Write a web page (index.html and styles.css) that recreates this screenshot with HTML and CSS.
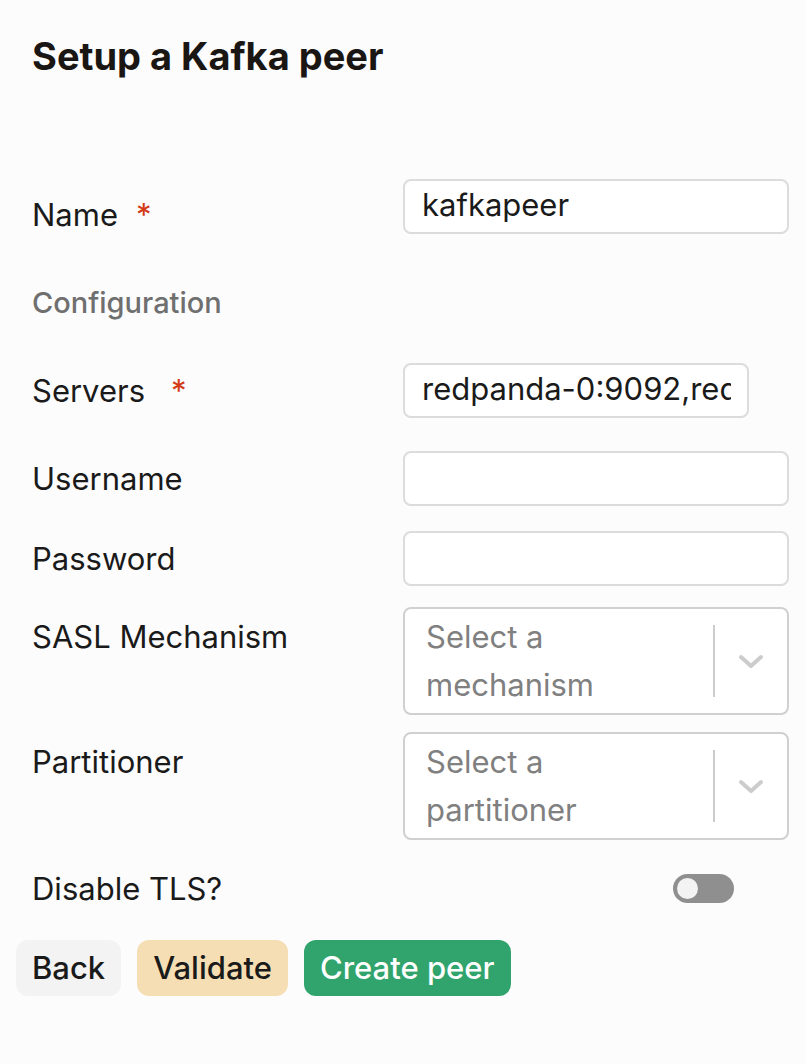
FILE: index.html
```html
<!DOCTYPE html>
<html lang="en">
<head>
<meta charset="utf-8">
<title>Setup a Kafka peer</title>
<link rel="stylesheet" href="styles.css">
</head>
<body>
<div class="page">
  <h1 class="title">Setup a Kafka peer</h1>
  <form class="form">
    <div class="row row-name">
      <label class="label label-name">Name<span class="req req-name">*</span></label>
      <input class="input" type="text" value="kafkapeer">
    </div>
    <div class="section">Configuration</div>
    <div class="row row-servers">
      <label class="label">Servers<span class="req req-servers">*</span></label>
      <input class="input input-servers" type="text" value="redpanda-0:9092,redpanda-1:9092">
    </div>
    <div class="row row-user">
      <label class="label">Username</label>
      <input class="input" type="text">
    </div>
    <div class="row row-pass">
      <label class="label">Password</label>
      <input class="input" type="password">
    </div>
    <div class="row row-select row-sasl">
      <label class="label label-top">SASL Mechanism</label>
      <div class="select">
        <div class="select-value">Select a mechanism</div>
        <div class="select-indicators">
          <span class="select-sep"></span>
          <svg class="chevron" width="26" height="16" viewBox="0 0 26 16"><path d="M3 3 L13 12 L23 3" fill="none" stroke="#cccccc" stroke-width="4" stroke-linecap="round" stroke-linejoin="round"/></svg>
        </div>
      </div>
    </div>
    <div class="row row-select row-part">
      <label class="label label-top">Partitioner</label>
      <div class="select">
        <div class="select-value">Select a partitioner</div>
        <div class="select-indicators">
          <span class="select-sep"></span>
          <svg class="chevron" width="26" height="16" viewBox="0 0 26 16"><path d="M3 3 L13 12 L23 3" fill="none" stroke="#cccccc" stroke-width="4" stroke-linecap="round" stroke-linejoin="round"/></svg>
        </div>
      </div>
    </div>
    <div class="row row-tls">
      <label class="label">Disable TLS?</label>
      <div class="toggle-cell"><span class="toggle"><span class="knob"></span></span></div>
    </div>
  </form>
  <div class="actions">
    <button class="btn btn-back" type="button">Back</button>
    <button class="btn btn-validate" type="button">Validate</button>
    <button class="btn btn-create" type="button">Create peer</button>
  </div>
</div>
</body>
</html>
```
FILE: styles.css
```css
* { box-sizing: border-box; }
html, body { margin: 0; padding: 0; background: #fcfcfc; }
body {
  font-family: Inter, "Noto Sans", "Liberation Sans", sans-serif;
  color: #1a1a1a;
  width: 806px;
  height: 1064px;
  overflow: hidden;
}
.page { padding: 33px 16px 0 16px; }
.title {
  margin: 0 0 0 16px;
  font-size: 38px;
  font-weight: 700;
  line-height: normal;
  color: #1a1614;
}
.form {
  display: flex;
  flex-direction: column;
  margin: 100px 1px 0 16px;
}
.row {
  display: grid;
  grid-template-columns: 371px 386px;
  align-items: center;
}
.row-select { align-items: start; }
.label {
  font-size: 31px;
  line-height: normal;
  color: #1a1a1a;
}
.label-name { padding-top: 15px; }
.label-top { padding-top: 11px; }
.req { color: #d43a17; }
.req-name { margin-left: 18px; }
.req-servers { margin-left: 26px; }
.section {
  margin-top: 51px;
  font-size: 29px;
  font-weight: 500;
  line-height: normal;
  color: #6f6f6f;
}
.row-servers { margin-top: 43px; }
.row-user { margin-top: 33px; }
.row-pass { margin-top: 25px; }
.row-sasl { margin-top: 21px; }
.row-part { margin-top: 17px; }
.row-tls { margin-top: 30px; }
.input {
  width: 100%;
  height: 55px;
  border: 2px solid #dcdcdc;
  border-radius: 8px;
  background: #ffffff;
  padding: 0 16px 4px 17px;
  font-family: inherit;
  font-size: 31px;
  color: #1a1a1a;
  outline: none;
}
.input-servers { width: 346px; }
.select {
  display: flex;
  min-height: 107px;
  border: 2px solid #d0d0d0;
  border-radius: 8px;
  background: #ffffff;
}
.select-value {
  flex: 1;
  padding: 4px 22px 4px 21px;
  font-size: 31px;
  line-height: 48px;
  color: #808080;
}
.select-indicators {
  display: flex;
  align-items: center;
  width: 74px;
  flex: none;
}
.select-sep {
  align-self: center;
  width: 2px;
  height: 72px;
  background: #cccccc;
}
.chevron { margin-left: 23px; margin-top: 2px; }
.toggle-cell { display: flex; padding-left: 270px; }
.toggle {
  display: flex;
  align-items: center;
  width: 61px;
  height: 29px;
  border-radius: 15px;
  background: #8f8f8f;
  padding-left: 4px;
}
.knob {
  width: 21px;
  height: 21px;
  border-radius: 50%;
  background: #f3f3f3;
}
.actions {
  display: flex;
  gap: 16px;
  margin-top: 33px;
}
.btn {
  height: 56px;
  border: none;
  border-radius: 12px;
  padding: 0 16px 2px;
  font-family: inherit;
  font-size: 31px;
  font-weight: 500;
  color: #1a1a1a;
  cursor: pointer;
}
.btn-back { background: #f3f3f3; }
.btn-validate { background: #f5deb3; }
.btn-create { background: #30a46c; color: #ffffff; }
```
